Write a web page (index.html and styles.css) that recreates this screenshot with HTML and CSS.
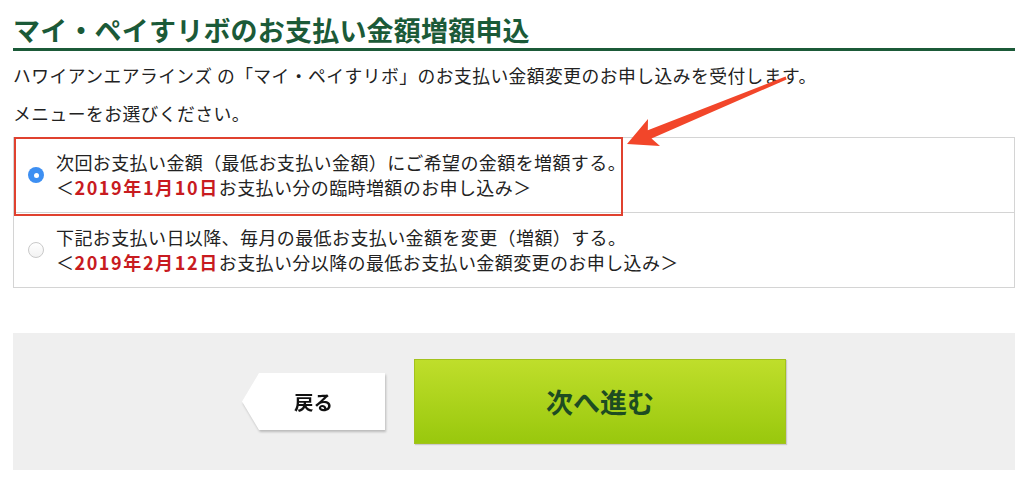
FILE: index.html
```html
<!DOCTYPE html>
<html lang="ja">
<head>
  <meta charset="UTF-8" />
  <meta name="viewport" content="width=device-width, initial-scale=1" />
  <title>マイ・ペイすリボのお支払い金額増額申込</title>
  <link rel="stylesheet" href="styles.css">
</head>
<body>

<main class="page">
  <h1 class="title">マイ・ペイすリボのお支払い金額増額申込</h1>

  <p class="lead">ハワイアンエアラインズ の「マイ・ペイすリボ」のお支払い金額変更のお申し込みを受付します。</p>
  <p class="lead lead-sub">メニューをお選びください。</p>

  <div class="options">
    <label class="option">
      <span class="radio checked"></span>
      <span class="option-text">
        次回お支払い金額（最低お支払い金額）にご希望の金額を増額する。<br>
        ＜<em>2019年1月10日</em>お支払い分の臨時増額のお申し込み＞
      </span>
    </label>
    <label class="option">
      <span class="radio"></span>
      <span class="option-text">
        下記お支払い日以降、毎月の最低お支払い金額を変更（増額）する。<br>
        ＜<em>2019年2月12日</em>お支払い分以降の最低お支払い金額変更のお申し込み＞
      </span>
    </label>
    <!-- 注釈：赤枠 -->
    <div class="highlight"></div>
  </div>

  <div class="actions">
    <div class="back-wrap">
      <button class="back-btn" type="button">戻る</button>
    </div>
    <button class="next-btn" type="button">次へ進む</button>
  </div>

  <!-- 注釈：矢印 -->
  <svg class="arrow" width="175" height="80" viewBox="0 0 175 80">
    <polygon fill="#f2462a" points="7,74 28,49 27.8,60.2 165.6,6.6 166.6,9.4 31.5,68.5 40,76"/>
  </svg>
</main>

</body>
</html>
```

FILE: styles.css
```css
body {
  margin: 0;
  font-family: "Noto Sans CJK JP", "Noto Sans", sans-serif;
  color: #222;
  background: #fff;
}
.page {
  position: relative;
  width: 1002px;
  margin: 0 0 0 13px;
  height: 478px;
}
.title {
  margin: 0;
  padding-top: 12px;
  font-size: 27px;
  line-height: 36px;
  font-weight: 700;
  color: #1b5a38;
  border-bottom: 3px solid #1b5a38;
  letter-spacing: 0.2px;
}
.lead {
  margin: 12px 0 0;
  font-size: 17.8px;
  line-height: 24px;
  letter-spacing: 0.45px;
}
.lead-sub {
  margin-top: 14px;
}
.options {
  position: relative;
  margin-top: 12px;
  border: 1px solid #d4d4d4;
}
.option {
  display: flex;
  align-items: center;
  gap: 12px;
  padding: 12px 12px 12px 14px;
  font-size: 18px;
  line-height: 25px;
  letter-spacing: 0.4px;
}
.option + .option {
  border-top: 1px solid #d4d4d4;
}
.option-text em {
  font-style: normal;
  font-weight: 700;
  color: #c81b1f;
  letter-spacing: 1.6px;
}
.radio {
  flex: none;
  width: 16px;
  height: 16px;
  border-radius: 50%;
  box-sizing: border-box;
  border: 1px solid #c9c9c9;
  background: linear-gradient(#fff, #f2f2f2);
  position: relative;
}
.radio.checked {
  border: none;
  background: #3d8ff2;
}
.radio.checked::after {
  content: "";
  position: absolute;
  left: 5.5px;
  top: 5.5px;
  width: 5px;
  height: 5px;
  border-radius: 50%;
  background: #fff;
}
.highlight {
  position: absolute;
  left: 0;
  top: -1px;
  width: 609px;
  height: 79px;
  box-sizing: border-box;
  border: 2px solid #e0412f;
}
.actions {
  margin-top: 45px;
  height: 137px;
  background: #efefef;
  display: flex;
  align-items: center;
  justify-content: center;
  gap: 29px;
}
.back-wrap {
  filter: drop-shadow(1px 2px 1px rgba(0, 0, 0, 0.22));
}
.back-btn {
  display: block;
  width: 143px;
  height: 57px;
  border: none;
  background: #fff;
  clip-path: polygon(17px 0, 100% 0, 100% 100%, 17px 100%, 0 50%);
  font-family: inherit;
  font-size: 19.5px;
  font-weight: 700;
  color: #111;
  padding: 0;
  cursor: pointer;
}
.next-btn {
  width: 372px;
  height: 85px;
  border: 1px solid #a3c21d;
  background: linear-gradient(#bfde2b, #99c80d);
  box-shadow: 1px 1px 1px rgba(0, 0, 0, 0.15);
  font-family: inherit;
  font-size: 27px;
  font-weight: 700;
  color: #1d4c22;
  cursor: pointer;
  padding: 0;
}
.arrow {
  position: absolute;
  left: 607px;
  top: 70px;
}
```
